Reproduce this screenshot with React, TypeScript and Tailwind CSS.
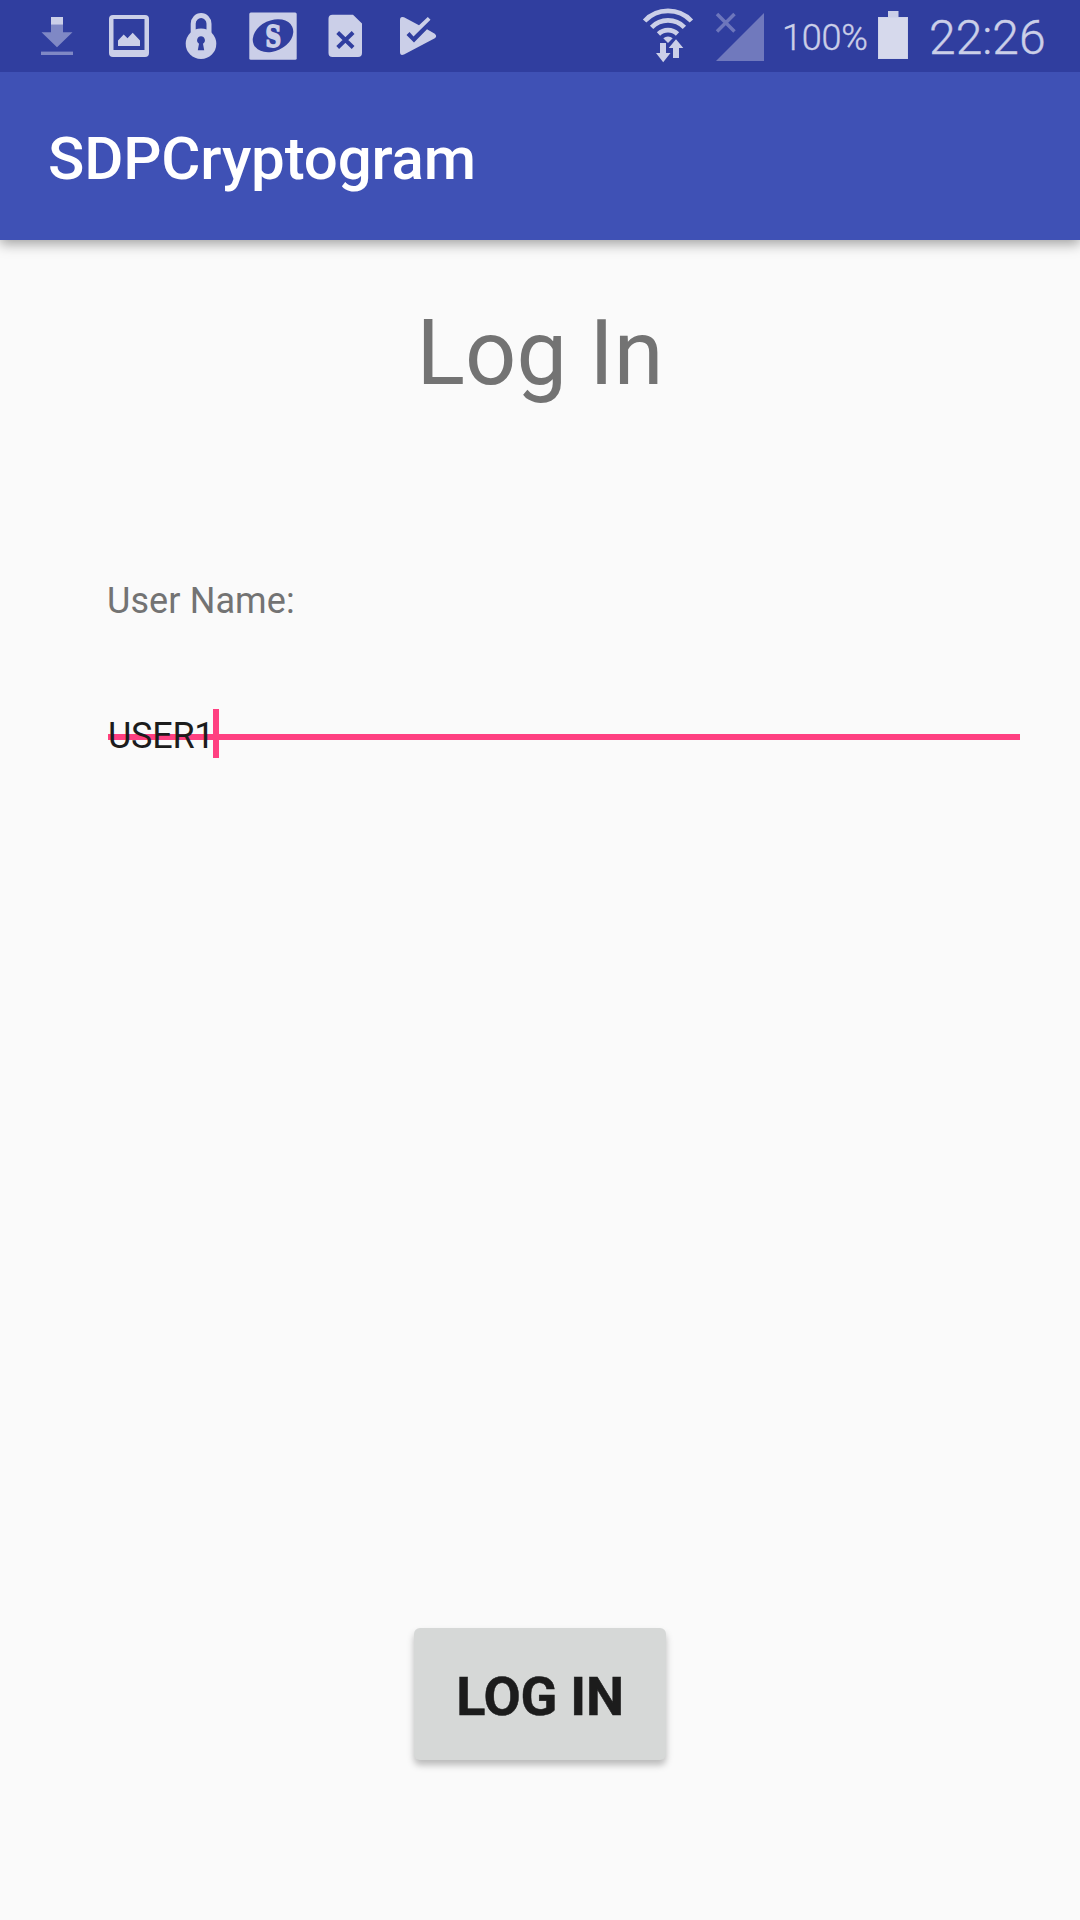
import React from "react";

const LIGHT = "#cbcfe8";
const DARK = "#303e9f";

function NotificationIcons() {
  return (
    <div className="flex h-full shrink-0">
      <svg className="ml-[36px] h-[72px] w-[42px]" viewBox="36 0 42 72">
        <path d="M51 24.5h12v7.8h9.5L57 47.3 41.5 32.3H51z" fill="#7f88c5" />
        <rect x="51" y="17" width="12" height="7.7" fill={LIGHT} />
        <rect x="41" y="51.6" width="32" height="3.4" fill="#7f88c5" />
      </svg>
      <svg className="ml-[26px] h-[72px] w-[50px]" viewBox="104 0 50 72">
        <path
          fillRule="evenodd"
          d="M113 15h32a4 4 0 0 1 4 4v34a4 4 0 0 1-4 4h-32a4 4 0 0 1-4-4V19a4 4 0 0 1 4-4zM113.5 19v31h31V19z"
          fill={LIGHT}
        />
        <path d="M118 40.5l5.7-6 3.8 3.7 5.2-5.5 7.3 7.8V46h-22z" fill={LIGHT} />
      </svg>
      <svg className="ml-[28px] h-[72px] w-[38px]" viewBox="182 0 38 72">
        <path d="M193.2 34V23.7a7.9 8.2 0 0 1 15.8 0V34" fill="none" stroke={LIGHT} strokeWidth="5" />
        <circle cx="201" cy="43.7" r="15.3" fill={LIGHT} />
        <path d="M201 36.3a4 4 0 0 1 2 7.4l1.2 6.5h-6.4l1.2-6.5a4 4 0 0 1 2-7.4z" fill={DARK} />
      </svg>
      <svg className="ml-[25px] h-[72px] w-[56px]" viewBox="245 0 56 72">
        <rect x="249.3" y="12.5" width="47.4" height="47.2" rx="1.5" fill={LIGHT} />
        <ellipse cx="273" cy="35.7" rx="21.2" ry="15.3" transform="rotate(-25 273 35.7)" fill={DARK} />
        <text
          transform="translate(273.2 47) scale(.72 1)"
          textAnchor="middle"
          fontFamily="DejaVu Serif"
          fontWeight="700"
          fontSize="30"
          fill={LIGHT}
          stroke={LIGHT}
          strokeWidth="1.8"
        >
          S
        </text>
      </svg>
      <svg className="ml-[23px] h-[72px] w-[42px]" viewBox="324 0 42 72">
        <path d="M332.5 14.7H353l9 8.8V53a4 4 0 0 1-4 4h-25.500a4 4 0 0 1-4-4V18.700a4 4 0 0 1 4-4z" fill={LIGHT} />
        <path d="M337.700 32.500l15.400 15M353.100 32.500l-15.400 15" stroke={DARK} strokeWidth="4" />
      </svg>
      <svg className="ml-[30px] h-[72px] w-[44px]" viewBox="396 0 44 72">
        <path
          d="M404 17.300L419 25.300L427.800 17L430.500 19.700L413.500 36.500L409.500 32L406.500 35L414 42.500L427 29.300L434.800 33.700Q437.500 36 434.800 38.200L404 54.500Q400 56 400 52V20Q400 16 404 17.300z"
          fill={LIGHT}
        />
      </svg>
    </div>
  );
}

function WifiIcon() {
  return (
    <svg className="h-[72px] w-[56px] shrink-0" viewBox="640 0 56 72">
      <g fill="none" stroke={LIGHT} strokeWidth="4.700">
        <path d="M644.600 21a32.300 32.300 0 0 1 46.800 0" />
        <path d="M651.600 27.300a23 23 0 0 1 32.800 0" />
        <path d="M658.500 34a13.600 13.600 0 0 1 19 0" />
      </g>
      <path d="M663.300 38.300a7 7 0 0 1 9.400 0L668 43z" fill={LIGHT} />
      <path d="M660 43h6v10h4.500L663.200 62.200 656 53h4z" fill={LIGHT} />
      <path d="M673 58h6V48h4.300L676 39.300 668.700 48h4.300z" fill={LIGHT} />
    </svg>
  );
}

function StatusBar() {
  return (
    <header className="relative z-20 flex h-[72px] shrink-0 items-center overflow-hidden bg-[#303e9f] text-[#cbcfe8]">
      <NotificationIcons />
      <div className="ml-[200px] flex h-full items-center">
        <WifiIcon />
        <svg className="ml-[16px] h-[72px] w-[56px] shrink-0" viewBox="712 0 56 72">
          <path d="M716 61L764 13V61z" fill="#7079bd" />
          <path d="M717 14l17.500 17.500M734.500 14L717 31.500" stroke="#6d76bc" strokeWidth="3.500" />
        </svg>
        <span className="ml-[14px] w-[92px] shrink-0 pt-[3px] text-[36px] leading-[42px] font-light tracking-[-0.2px] whitespace-nowrap [-webkit-text-stroke:0.4px_#cbcfe8]">
          100%
        </span>
        <svg className="h-[72px] w-[38px] shrink-0" viewBox="874 0 38 72">
          <path d="M888 11h10.500v6H908v42h-30V17h10z" fill="#cbcfe8" />
          <path d="M878.700 17.500h28.600v41h-28.600z" fill="#d6d9ec" />
        </svg>
        <span className="ml-[17px] shrink-0 pt-[3px] text-[48px] leading-[56px] font-light whitespace-nowrap [-webkit-text-stroke:0.4px_#cbcfe8]">
          22:26
        </span>
      </div>
    </header>
  );
}

export default function App() {
  return (
    <div className="flex h-[1920px] w-[1080px] flex-col overflow-hidden bg-[#fafafa] font-['Roboto',sans-serif]">
      <StatusBar />
      <div className="z-10 flex h-[168px] shrink-0 items-center bg-[#3f51b5] pt-[5px] pl-[48px] shadow-[0_4px_12px_rgba(0,0,0,0.36)]">
        <h1 className="text-[60px] leading-[70px] font-medium tracking-[-0.16px] text-white">SDPCryptogram</h1>
      </div>
      <main className="flex flex-1 flex-col">
        <h2 className="mt-[61px] text-center text-[90px] leading-[106px] text-[#737373]">Log In</h2>
        <label className="mt-[173px] ml-[107px] text-[36px] leading-[42px] tracking-[0.1px] text-[#737373]">User Name:</label>
        <div className="relative mt-[87px] ml-[108px] flex h-[49px] w-[912px] items-center">
          <div className="absolute inset-x-0 top-[25px] h-[6px] bg-[#ff4081]" />
          <span className="relative mt-[5px] w-[105px] text-[36px] leading-[42px] tracking-[-0.25px] whitespace-nowrap text-[#1c1c1c]">
            USER1
          </span>
          <div className="relative h-[49px] w-[6px] bg-[#ff4081]" />
        </div>
        <button className="mt-[870px] flex h-[132px] w-[252px] items-center justify-center self-center rounded-[6px] bg-[#d6d8d7] pt-[5px] text-[54px] leading-[64px] font-bold tracking-[-0.2px] text-[#1c1c1c] shadow-[0_5px_7px_rgba(0,0,0,0.26)] [-webkit-text-stroke:0.5px_#1c1c1c]">
          LOG IN
        </button>
      </main>
    </div>
  );
}
